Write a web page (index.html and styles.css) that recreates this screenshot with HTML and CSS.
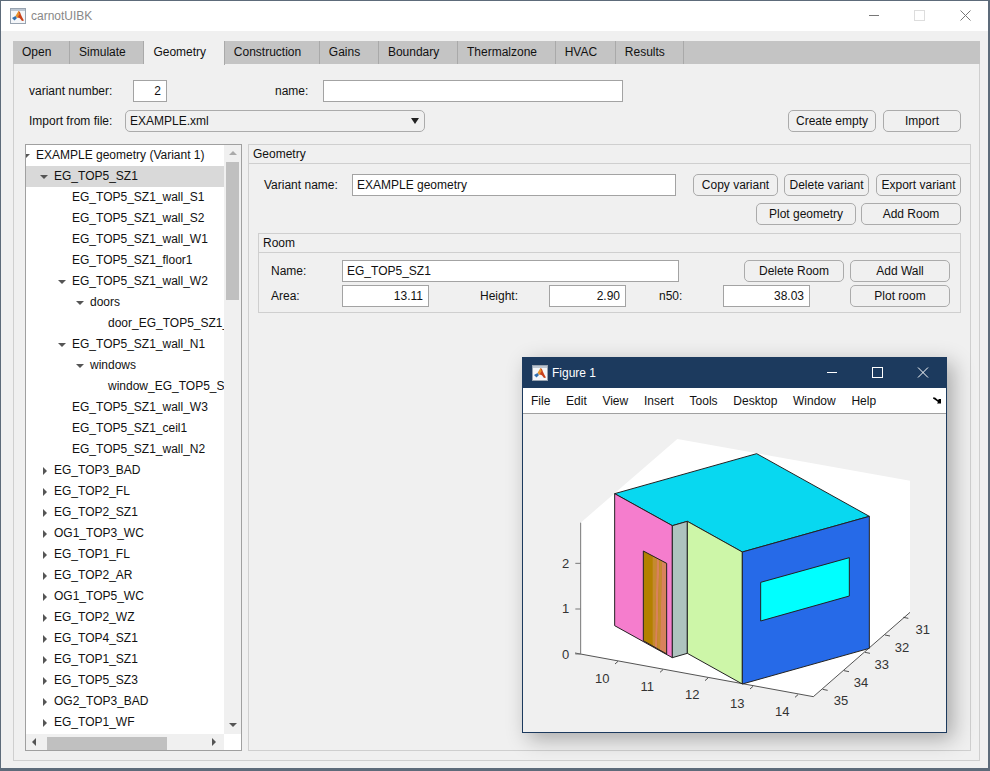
FILE: index.html
```html
<!DOCTYPE html>
<html lang="en">
<head>
    <meta charset="UTF-8">
    <title>carnotUIBK</title>
    <link rel="stylesheet" href="styles.css">
</head>
<body>

<div class="window">
    <div class="titlebar">
        <svg class="logo" viewBox="0 0 16 16">
            <rect class="logo-frame" x="0.5" y="0.5" width="15" height="15"/>
            <rect class="logo-top" x="1" y="1" width="14" height="2"/>
            <path class="logo-blue" d="M2 10l3.500-2 1.500 2-2.500 2.500z"/>
            <path class="logo-orange" d="M5.500 8l3-5 2 2-3 5z"/>
            <path class="logo-red" d="M8.500 3c1.500 0 3 6 5.500 9.500l-2 0.500-1.500-2-1-1-2-0.500 2-3.500z"/>
        </svg>
        <span class="app-title">carnotUIBK</span>
        <svg class="win-btns" viewBox="0 0 102 12">
            <path class="win-min" d="M0 6.500h10"/>
            <rect class="win-max" x="45.500" y="1.500" width="10" height="10"/>
            <path class="win-close" d="M91.500 1.500l10 10M101.500 1.500l-10 10"/>
        </svg>
    </div>

    <div class="content">
        <div class="tabs">
            <div class="tab">Open</div>
            <div class="tab">Simulate</div>
            <div class="tab active">Geometry</div>
            <div class="tab">Construction</div>
            <div class="tab">Gains</div>
            <div class="tab">Boundary</div>
            <div class="tab">Thermalzone</div>
            <div class="tab">HVAC</div>
            <div class="tab">Results</div>
        </div>

        <div class="tab-panel">
            <div class="top-row">
                <label class="lbl-variant">variant number:</label>
                <input class="field num w-variant" value="2">
                <label class="lbl-name">name:</label>
                <input class="field w-name" value="">
            </div>
            <div class="top-row second">
                <label class="lbl-import">Import from file:</label>
                <div class="combo">EXAMPLE.xml<span class="combo-arrow"></span></div>
                <button class="btn w-create">Create empty</button>
                <button class="btn w-import">Import</button>
            </div>

            <div class="main">
                <div class="tree">
                    <div class="tree-top">
                        <div class="rows">
                            <div class="row d0 open">EXAMPLE geometry (Variant 1)</div>
                            <div class="row d1 open selected">EG_TOP5_SZ1</div>
                            <div class="row d2">EG_TOP5_SZ1_wall_S1</div>
                            <div class="row d2">EG_TOP5_SZ1_wall_S2</div>
                            <div class="row d2">EG_TOP5_SZ1_wall_W1</div>
                            <div class="row d2">EG_TOP5_SZ1_floor1</div>
                            <div class="row d2 open">EG_TOP5_SZ1_wall_W2</div>
                            <div class="row d3 open">doors</div>
                            <div class="row d4">door_EG_TOP5_SZ1_wall_W2</div>
                            <div class="row d2 open">EG_TOP5_SZ1_wall_N1</div>
                            <div class="row d3 open">windows</div>
                            <div class="row d4">window_EG_TOP5_SZ1_wall_N1</div>
                            <div class="row d2">EG_TOP5_SZ1_wall_W3</div>
                            <div class="row d2">EG_TOP5_SZ1_ceil1</div>
                            <div class="row d2">EG_TOP5_SZ1_wall_N2</div>
                            <div class="row d1 closed">EG_TOP3_BAD</div>
                            <div class="row d1 closed">EG_TOP2_FL</div>
                            <div class="row d1 closed">EG_TOP2_SZ1</div>
                            <div class="row d1 closed">OG1_TOP3_WC</div>
                            <div class="row d1 closed">EG_TOP1_FL</div>
                            <div class="row d1 closed">EG_TOP2_AR</div>
                            <div class="row d1 closed">OG1_TOP5_WC</div>
                            <div class="row d1 closed">EG_TOP2_WZ</div>
                            <div class="row d1 closed">EG_TOP4_SZ1</div>
                            <div class="row d1 closed">EG_TOP1_SZ1</div>
                            <div class="row d1 closed">EG_TOP5_SZ3</div>
                            <div class="row d1 closed">OG2_TOP3_BAD</div>
                            <div class="row d1 closed">EG_TOP1_WF</div>
                        </div>
                        <div class="vscroll">
                            <span class="arr-up"></span>
                            <div class="vthumb"></div>
                            <span class="arr-down"></span>
                        </div>
                    </div>
                    <div class="tree-bottom">
                        <div class="hscroll">
                            <span class="arr-left"></span>
                            <div class="hthumb"></div>
                            <span class="arr-right"></span>
                        </div>
                    </div>
                </div>

                <div class="geometry">
                    <div class="group-title">Geometry</div>
                    <div class="geometry-body">
                        <div class="form-row">
                            <label class="lbl-vname">Variant name:</label>
                            <input class="field w-vname" value="EXAMPLE geometry">
                            <button class="btn w-var first-var">Copy variant</button>
                            <button class="btn w-var">Delete variant</button>
                            <button class="btn w-var export-var">Export variant</button>
                        </div>
                        <div class="form-row end">
                            <button class="btn w-100">Plot geometry</button>
                            <button class="btn w-100">Add Room</button>
                        </div>

                        <div class="room">
                            <div class="group-title">Room</div>
                            <div class="room-body">
                                <div class="form-row">
                                    <label class="lbl-room">Name:</label>
                                    <input class="field w-rname" value="EG_TOP5_SZ1">
                                    <button class="btn w-100 del-room">Delete Room</button>
                                    <button class="btn w-100 add-wall">Add Wall</button>
                                </div>
                                <div class="form-row tight">
                                    <label class="lbl-room">Area:</label>
                                    <input class="field num w-87" value="13.11">
                                    <label class="lbl-height">Height:</label>
                                    <input class="field num w-77" value="2.90">
                                    <label class="lbl-n50">n50:</label>
                                    <input class="field num w-87" value="38.03">
                                    <button class="btn w-100 plot-room">Plot room</button>
                                </div>
                            </div>
                        </div>
                    </div>
                </div>
            </div>
        </div>
    </div>
</div>

<div class="figure">
    <div class="fig-title">
        <svg class="logo fig-logo" viewBox="0 0 16 16">
            <rect class="logo-frame" x="0.5" y="0.5" width="15" height="15"/>
            <rect class="logo-top" x="1" y="1" width="14" height="2"/>
            <path class="logo-blue" d="M2 10l3.500-2 1.500 2-2.500 2.500z"/>
            <path class="logo-orange" d="M5.500 8l3-5 2 2-3 5z"/>
            <path class="logo-red" d="M8.500 3c1.500 0 3 6 5.500 9.500l-2 0.500-1.500-2-1-1-2-0.500 2-3.500z"/>
        </svg>
        <span>Figure 1</span>
        <svg class="fig-btns" viewBox="0 0 102 12">
            <path class="fig-stroke" d="M0 6.500h10"/>
            <rect class="fig-stroke" x="45.500" y="1.500" width="10" height="10"/>
            <path class="fig-stroke" d="M91 1.500l10 10M101 1.500l-10 10"/>
        </svg>
    </div>
    <div class="fig-menu">
        <span>File</span><span>Edit</span><span>View</span><span>Insert</span><span>Tools</span><span>Desktop</span><span>Window</span><span>Help</span>
        <svg class="dock" viewBox="0 0 8 7">
            <path d="M0 0.500h2l3 2.500 1-1 2 0v4.500h-4l1-1.500-2-1.500-3-2z"/>
        </svg>
    </div>
    <div class="fig-body">
        <svg class="plot" viewBox="0 0 1200 900" width="400" height="300">
            <polygon class="plane" points="412,27 1110,152 1110,547 820,800 122,672 122,278"/>

            <polyline class="axis" points="105,669 820,800 1110,547"/>
            <path class="axis" d="M225,702l9,-8M360,727l9,-8M495,752l9,-8M630,777l9,-8M765,802l9,-8"/>
            <path class="axis" d="M1090,562l15,3M1035,615l15,3M975,667l15,3M912,722l15,3M848,778l15,3"/>
            <line class="axis-z" x1="122" y1="278" x2="122" y2="672"/>
            <path class="axis-z" d="M122,400h-16M122,537h-16M122,672h-16"/>

            <polygon class="face cyan" points="224,191 650,71 988,259 607,366 442,274 397,287"/>
            <polygon class="face pink" points="224,191 397,287 397,683 224,587"/>
            <polygon class="face gray" points="397,287 442,274 442,670 397,683"/>
            <polygon class="face green" points="442,274 607,366 607,762 442,670"/>
            <polygon class="face blue" points="607,366 988,259 988,655 607,762"/>
            <polygon class="door" points="310,363 380,400 380,672 310,632"/>
            <polygon class="stripe-a" points="338,378 350,385 345,651 338,647"/>
            <polygon class="stripe-b" points="350,385 358,389 352,655 345,651"/>
            <polygon class="stripe-a" points="358,389 366,393 360,659 352,655"/>
            <polygon class="stripe-b" points="366,393 379,401 379,670 360,659"/>
            <polygon class="face-outline" points="310,363 380,400 380,672 310,632"/>
            <polygon class="face hole" points="662,457 928,383 928,498 662,573"/>

            <text class="tick" x="187" y="758" text-anchor="middle">10</text>
            <text class="tick" x="322" y="783" text-anchor="middle">11</text>
            <text class="tick" x="457" y="807" text-anchor="middle">12</text>
            <text class="tick" x="592" y="833" text-anchor="middle">13</text>
            <text class="tick" x="727" y="858" text-anchor="middle">14</text>
            <text class="tick" x="1148" y="612" text-anchor="middle">31</text>
            <text class="tick" x="1086" y="666" text-anchor="middle">32</text>
            <text class="tick" x="1025" y="717" text-anchor="middle">33</text>
            <text class="tick" x="963" y="772" text-anchor="middle">34</text>
            <text class="tick" x="903" y="826" text-anchor="middle">35</text>
            <text class="tick" x="77" y="414" text-anchor="middle">2</text>
            <text class="tick" x="77" y="550" text-anchor="middle">1</text>
            <text class="tick" x="77" y="687" text-anchor="middle">0</text>
        </svg>
    </div>
</div>

</body>
</html>
```

FILE: styles.css
```css
* {
    box-sizing: border-box;
}
html, body {
    height: 100%;
}
body {
    margin: 0;
    padding: 1px 2px 3px 1px;
    background-color: #5d6b7a;
    font-family: "Liberation Sans", Arial, sans-serif;
    font-size: 12px;
    color: #111;
    overflow: hidden;
}
.window {
    height: 100%;
    display: flex;
    flex-direction: column;
    background-color: #f0f0f0;
}
.titlebar {
    height: 30px;
    flex: none;
    display: flex;
    align-items: center;
    padding-left: 9px;
    background: white;
}
.logo {
    width: 16px;
    height: 16px;
    flex: none;
}
.logo-frame {
    fill: #f4f6f9;
    stroke: #98a3b0;
}
.logo-top {
    fill: #bcc6d2;
}
.logo-blue {
    fill: #2f6fb0;
}
.logo-orange {
    fill: #e8912a;
}
.logo-red {
    fill: #c8401a;
}
.app-title {
    margin-left: 5px;
    font-size: 12px;
    color: #888;
}
.win-btns {
    width: 102px;
    height: 12px;
    margin: 0 17px 2px auto;
    overflow: visible;
}
.win-min, .win-close {
    fill: none;
    stroke: #777;
}
.win-max {
    fill: none;
    stroke: #ddd;
}

.content {
    flex: 1;
    min-height: 0;
    display: flex;
    flex-direction: column;
    padding: 10px 8px 7px 12px;
}
.tabs {
    display: flex;
    height: 23px;
    flex: none;
    background-color: #c4c4c4;
}
.tab {
    padding: 0 17.700px 0 9px;
    line-height: 23px;
    border-right: 1px solid #a9a9a9;
    white-space: nowrap;
}
.tab.active {
    background-color: #f0f0f0;
    height: 24px;
}
.tab-panel {
    flex: 1;
    min-height: 0;
    display: flex;
    flex-direction: column;
    padding: 16px 9px 9px 11px;
    border: 1px solid #cfcfcf;
    border-top: none;
}
.top-row {
    display: flex;
    align-items: center;
    height: 22px;
    padding: 0 9px 0 4px;
    flex: none;
}
.top-row.second {
    margin-top: 8px;
}
.field {
    height: 22px;
    padding: 0 4px;
    border: 1px solid #a3a3a3;
    border-radius: 0;
    background: white;
    font-family: inherit;
    font-size: 12px;
    color: #111;
    flex: none;
}
.num {
    text-align: right;
    padding-right: 5px;
}
.btn {
    height: 22px;
    padding: 0;
    border: 1px solid #ababab;
    border-radius: 5px;
    background-color: #f0f0f0;
    font-family: inherit;
    font-size: 12px;
    color: #111;
    flex: none;
}
.lbl-variant {
    width: 104px;
}
.w-variant {
    width: 34px;
}
.lbl-name {
    width: 48px;
    margin-left: 108px;
}
.w-name {
    width: 300px;
}
.lbl-import {
    width: 96px;
}
.combo {
    width: 300px;
    height: 22px;
    line-height: 20px;
    padding-left: 4px;
    display: flex;
    align-items: center;
    justify-content: space-between;
    border: 1px solid #ababab;
    border-radius: 5px;
}
.combo-arrow {
    margin-right: 5px;
    border-left: 4px solid transparent;
    border-right: 4px solid transparent;
    border-top: 6px solid #222;
}
.w-create {
    width: 88px;
    margin-left: auto;
}
.w-import {
    width: 78px;
    margin-left: 7px;
}

.main {
    flex: 1;
    min-height: 0;
    display: flex;
    gap: 6px;
    margin-top: 12px;
}
.tree {
    width: 217px;
    flex: none;
    display: flex;
    flex-direction: column;
    border: 1px solid #a0a0a0;
    background: white;
}
.tree-top {
    flex: 1;
    min-height: 0;
    display: flex;
}
.rows {
    width: 198px;
    flex: none;
    overflow: hidden;
}
.row {
    height: 21px;
    line-height: 21px;
    white-space: nowrap;
}
.row.selected {
    background-color: #d9d9d9;
}
.d0 {
    padding-left: 10px;
}
.d1 {
    padding-left: 28px;
}
.d2 {
    padding-left: 46px;
}
.d3 {
    padding-left: 64px;
}
.d4 {
    padding-left: 82px;
}
.open::before {
    content: "";
    display: inline-block;
    vertical-align: middle;
    margin: 0 6px 0 -14px;
    border-left: 4px solid transparent;
    border-right: 4px solid transparent;
    border-top: 4px solid #555;
}
.closed::before {
    content: "";
    display: inline-block;
    vertical-align: middle;
    margin: 0 7px 0 -11px;
    border-top: 4px solid transparent;
    border-bottom: 4px solid transparent;
    border-left: 4px solid #555;
}
.vscroll {
    flex: 1;
    display: flex;
    flex-direction: column;
    align-items: center;
    background-color: #f0f0f0;
    padding: 6px 0 7px;
}
.vthumb {
    width: 13px;
    height: 138px;
    margin-top: 7px;
    background-color: #c0c0c0;
}
.arr-up {
    border-left: 4px solid transparent;
    border-right: 4px solid transparent;
    border-bottom: 4px solid #aaa;
}
.arr-down {
    margin-top: auto;
    border-left: 4px solid transparent;
    border-right: 4px solid transparent;
    border-top: 4px solid #555;
}
.tree-bottom {
    height: 16px;
    flex: none;
}
.hscroll {
    width: 198px;
    height: 16px;
    display: flex;
    align-items: center;
    background-color: #f0f0f0;
    padding: 0 6px 0 6px;
}
.hthumb {
    width: 120px;
    height: 13px;
    margin-left: 11px;
    margin-top: 2px;
    background-color: #c0c0c0;
}
.arr-left {
    border-top: 4px solid transparent;
    border-bottom: 4px solid transparent;
    border-right: 4px solid #555;
}
.arr-right {
    margin-left: auto;
    margin-right: 2px;
    border-top: 4px solid transparent;
    border-bottom: 4px solid transparent;
    border-left: 4px solid #555;
}

.geometry {
    flex: 1;
    border: 1px solid #cfcfcf;
}
.group-title {
    height: 19px;
    line-height: 19px;
    padding-left: 4px;
    border-bottom: 1px solid #cfcfcf;
}
.geometry-body {
    padding: 10px 9px 0 15px;
}
.form-row {
    display: flex;
    align-items: center;
    height: 22px;
}
.form-row.end {
    justify-content: flex-end;
    gap: 5px;
    margin-top: 7px;
}
.form-row.tight {
    margin-top: 3px;
}
.lbl-vname {
    width: 88px;
}
.w-vname {
    width: 324px;
}
.w-var {
    width: 85px;
    margin-left: 6px;
}
.first-var {
    margin-left: 17px;
}
.export-var {
    margin-left: 7px;
}
.w-100 {
    width: 100px;
}
.room {
    width: 703px;
    height: 80px;
    margin: 8px 0 0 -6px;
    border: 1px solid #cfcfcf;
}
.room-body {
    padding: 7px 0 0 12px;
}
.lbl-room {
    width: 71px;
}
.w-rname {
    width: 337px;
}
.del-room {
    margin-left: 65px;
}
.add-wall {
    margin-left: 6px;
}
.w-87 {
    width: 87px;
}
.w-77 {
    width: 77px;
}
.lbl-height {
    width: 69px;
    margin-left: 51px;
}
.lbl-n50 {
    width: 64px;
    margin-left: 33px;
}
.plot-room {
    margin-left: 40px;
}

/* figure window floats over the main one */
.figure {
    position: absolute;
    left: 522px;
    top: 357px;
    width: 425px;
    height: 376px;
    display: flex;
    flex-direction: column;
    background-color: #f0f0f0;
    border: 1px solid #1c3a5e;
    box-shadow: 6px 6px 20px rgba(0, 0, 0, 0.3);
}
.fig-title {
    height: 30px;
    flex: none;
    display: flex;
    align-items: center;
    padding-left: 9px;
    background-color: #1c3a5e;
    color: white;
}
.fig-logo {
    margin-right: 4px;
}
.fig-btns {
    width: 102px;
    height: 12px;
    margin: 0 17px 2px auto;
    overflow: visible;
}
.fig-stroke {
    fill: none;
    stroke: white;
}
.fig-menu {
    height: 26px;
    flex: none;
    display: flex;
    align-items: center;
    gap: 15.700px;
    padding-left: 8px;
    background: white;
    border-bottom: 1px solid #a0a0a0;
    color: #111;
}
.dock {
    width: 8px;
    height: 7px;
    margin-left: auto;
    margin-right: 5px;
}
.fig-body {
    flex: 1;
    padding: 16px 0 0 17px;
}
.plot {
    display: block;
}
.plane {
    fill: white;
}
.axis {
    fill: none;
    stroke: #333;
    stroke-width: 2.500;
}
.axis-z {
    fill: none;
    stroke: #777;
    stroke-width: 3;
}
.face {
    stroke: #222;
    stroke-width: 3;
    stroke-linejoin: round;
}
.face-outline {
    fill: none;
    stroke: #222;
    stroke-width: 3;
}
.cyan {
    fill: #08d8f0;
}
.pink {
    fill: #f57dcd;
}
.gray {
    fill: #aec3bf;
}
.green {
    fill: #cdf6a8;
}
.blue {
    fill: #266ae8;
}
.door {
    fill: #b38000;
}
.hole {
    fill: #00ffff;
}
.stripe-a {
    fill: #c58a30;
}
.stripe-b {
    fill: #d8825c;
}
.tick {
    font-family: "Liberation Sans", Arial, sans-serif;
    font-size: 39px;
    fill: #333;
}
```
